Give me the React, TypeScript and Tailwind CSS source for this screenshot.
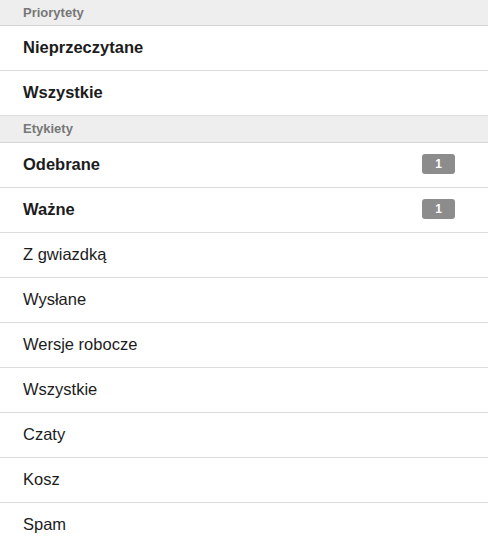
import React from 'react';

type Item = { label: string; bold?: boolean; count?: number };

const priority: Item[] = [
  { label: 'Nieprzeczytane', bold: true },
  { label: 'Wszystkie', bold: true },
];

const labels: Item[] = [
  { label: 'Odebrane', bold: true, count: 1 },
  { label: 'Ważne', bold: true, count: 1 },
  { label: 'Z gwiazdką' },
  { label: 'Wysłane' },
  { label: 'Wersje robocze' },
  { label: 'Wszystkie' },
  { label: 'Czaty' },
  { label: 'Kosz' },
  { label: 'Spam' },
];

function SectionHeader({ title, tall }: { title: string; tall?: boolean }) {
  return (
    <div
      className={`${tall ? 'h-[27px]' : 'h-[26px]'} bg-[#eeeeee] border-b border-[#d4d4d4] flex items-center px-[23px] text-[13px] font-bold text-[#777777]`}
    >
      {title}
    </div>
  );
}

function Row({ item }: { item: Item }) {
  return (
    <div className="h-[45px] border-b border-[#dcdcdc] flex items-center justify-between pl-[23px] pr-[33px] pb-[3px]">
      <span className={`text-[16.5px] leading-[20px] text-[#1c1c1c] ${item.bold ? 'font-bold' : ''}`}>{item.label}</span>
      {item.count !== undefined && (
        <span className="w-[33px] h-[20px] mt-[1px] rounded-[3px] bg-[#8c8c8c] text-white text-[12px] font-bold flex items-center justify-center">
          {item.count}
        </span>
      )}
    </div>
  );
}

export default function App() {
  return (
    <div className="w-[488px] h-[543px] overflow-hidden bg-white font-['Liberation_Sans',Arial,sans-serif]">
      <SectionHeader title="Priorytety" />
      {priority.map((it) => (
        <Row key={it.label} item={it} />
      ))}
      <SectionHeader title="Etykiety" tall />
      {labels.map((it) => (
        <Row key={it.label} item={it} />
      ))}
    </div>
  );
}
